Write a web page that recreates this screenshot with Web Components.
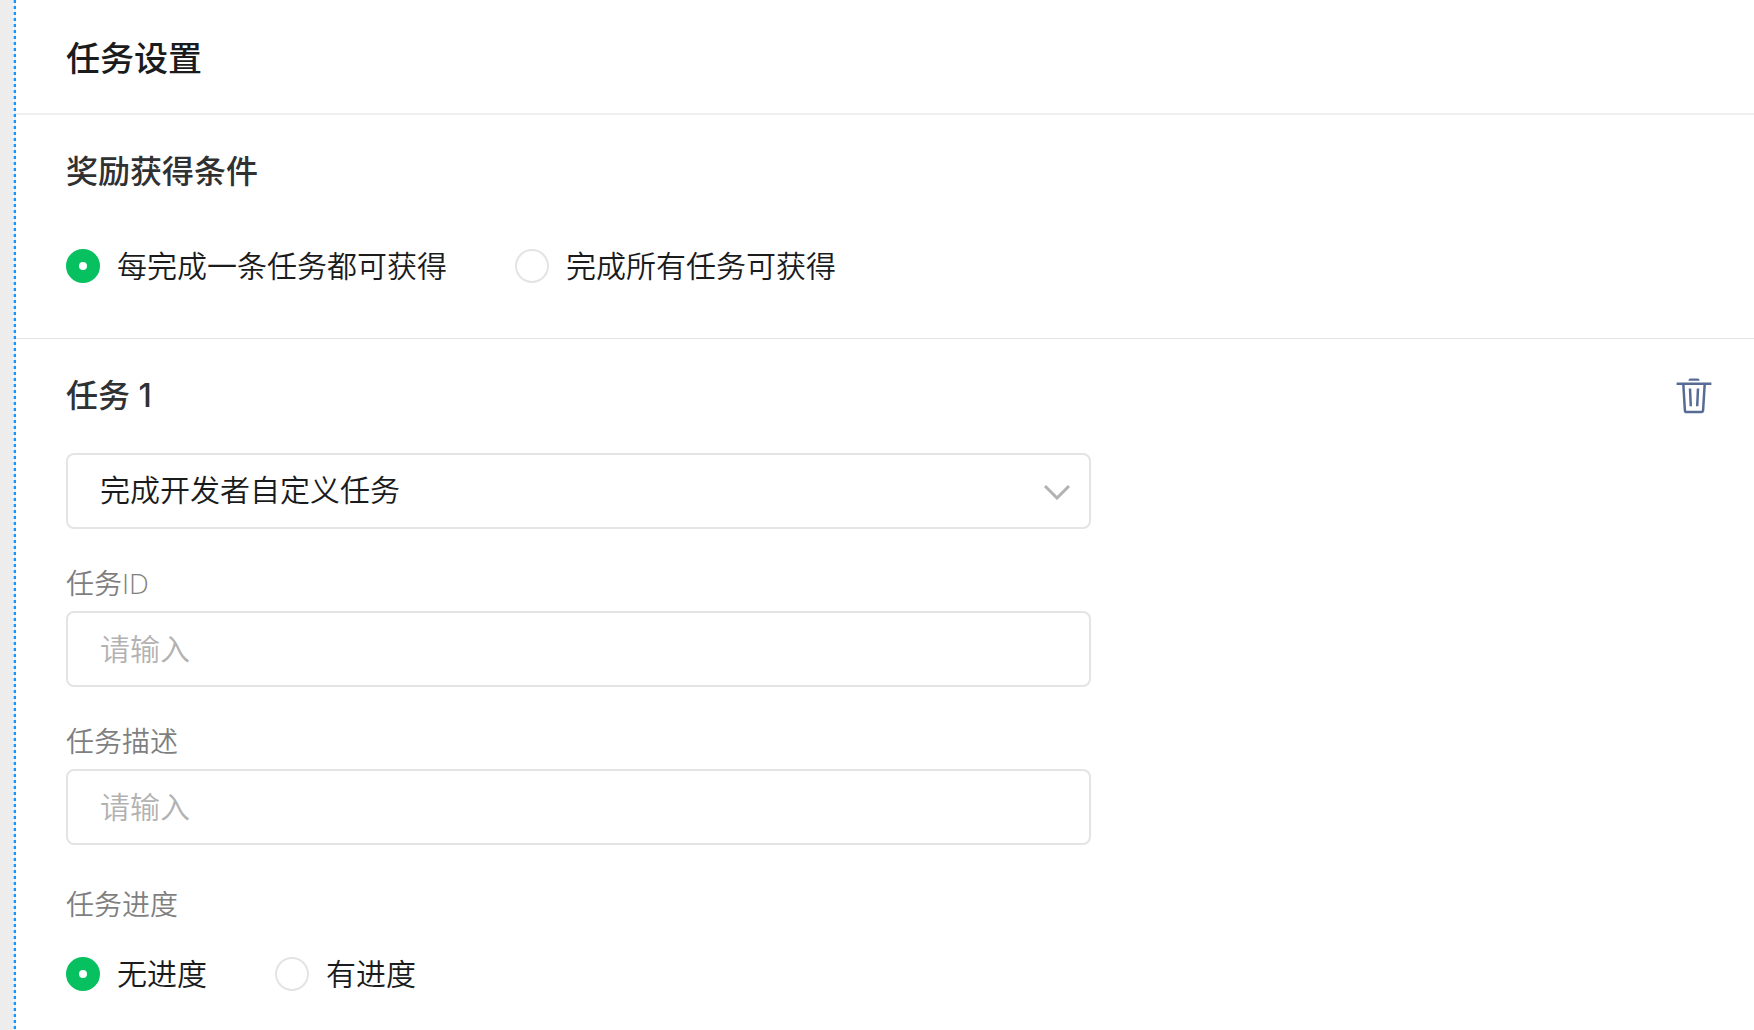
<!DOCTYPE html>
<html lang="zh-CN">
<head>
<meta charset="utf-8">
<meta name="viewport" content="width=device-width, initial-scale=1">
<title>任务设置</title>
<style>
    html, body {
        margin: 0;
        min-height: 100%;
    }
    body {
        display: flex;
        min-height: 100vh;
        background: #ededed;
        color: #1a1b1c;
        font-family: "Open Sans", "Noto Sans CJK SC", sans-serif;
        font-size: 30px;
        font-weight: 350;
        line-height: 42px;
    }
</style>
</head>
<body>
<settings-panel heading="任务设置">
    <settings-section heading="奖励获得条件">
        <radio-group name="condition" label="奖励获得条件" options="每完成一条任务都可获得|完成所有任务可获得"></radio-group>
    </settings-section>
    <settings-section heading="任务 1" class="task">
        <delete-button slot="action" label="删除任务"></delete-button>
        <select-field label="任务类型" options="完成开发者自定义任务"></select-field>
        <text-field label="任务ID" placeholder="请输入"></text-field>
        <text-field label="任务描述" placeholder="请输入"></text-field>
        <radio-group name="progress" label="任务进度" options="无进度|有进度" show-label></radio-group>
    </settings-section>
</settings-panel>

<script>
class SettingsPanel extends HTMLElement {
    constructor(){
        super();
        this.attachShadow({mode:"open"}).innerHTML = `
            <style>
                :host {
                    display: flex;
                    flex: 1;
                    min-width: 0;
                    margin-left: 13px;
                    background: #fff;
                }
                .edge {
                    box-sizing: border-box;
                    flex: none;
                    width: 3px;
                    border-left: 1px solid #ffffff99;
                    background: repeating-linear-gradient(#1296ff 0 3px, #e4f2fd 3px 6px) border-box;
                }
                main {
                    flex: 1;
                    min-width: 0;
                }
                header {
                    padding: 33px 50px 30px;
                    border-bottom: 2px solid #efefef;
                }
                h1 {
                    margin: 0;
                    font-size: 34px;
                    font-weight: 500;
                    line-height: 50px;
                }
            </style>
            <div class="edge"></div>
            <main>
                <header><h1></h1></header>
                <slot></slot>
            </main>
        `;
        this.shadowRoot.querySelector("h1").textContent = this.getAttribute("heading");
    }
}

class SettingsSection extends HTMLElement {
    constructor(){
        super();
        this.attachShadow({mode:"open"}).innerHTML = `
            <style>
                :host {
                    display: block;
                    padding: 36px 42px 51px 50px;
                    border-bottom: 1px solid #e4e4e4;
                }
                :host(.task) {
                    padding-bottom: 36px;
                    border-bottom: 0;
                }
                .head {
                    display: flex;
                    align-items: center;
                    justify-content: space-between;
                    margin-bottom: 52px;
                }
                :host(.task) .head {
                    margin-bottom: 36px;
                }
                h2 {
                    margin: 0;
                    color: #2f3133;
                    font-family: Inter, "Noto Sans CJK SC", sans-serif;
                    font-size: 32px;
                    font-weight: 500;
                    line-height: 42px;
                }
                .body {
                    display: flex;
                    flex-direction: column;
                    gap: 36px;
                    max-width: 1025px;
                }
            </style>
            <div class="head"><h2></h2><slot name="action"></slot></div>
            <div class="body"><slot></slot></div>
        `;
        this.shadowRoot.querySelector("h2").textContent = this.getAttribute("heading");
    }
}

class RadioGroup extends HTMLElement {
    constructor(){
        super();
        var name = this.getAttribute("name");
        var label = this.getAttribute("label");
        var options = this.getAttribute("options").split("|");
        this.attachShadow({mode:"open"}).innerHTML = `
            <style>
                :host {
                    display: block;
                }
                :host([show-label]) {
                    padding-top: 5px;
                }
                .title {
                    margin-bottom: 31px;
                    color: #7f7f7f;
                    font-size: 28px;
                    line-height: 36px;
                }
                .options {
                    display: flex;
                    flex-wrap: wrap;
                    gap: 68px;
                }
                label {
                    display: flex;
                    align-items: center;
                    gap: 17px;
                    cursor: pointer;
                }
                input {
                    appearance: none;
                    flex: none;
                    box-sizing: border-box;
                    width: 34px;
                    height: 34px;
                    margin: 0;
                    border: 2px solid #e4e4e4;
                    border-radius: 50%;
                    background: #fff;
                    cursor: pointer;
                }
                input:checked {
                    border: 13px solid #07c160;
                }
            </style>
            ${this.hasAttribute("show-label") ? `<div class="title">${label}</div>` : ""}
            <div class="options" role="radiogroup" aria-label="${label}">
                ${options.map((text,i) => `
                    <label><input type="radio" name="${name}" value="${i}" ${i ? "" : "checked"}><span>${text}</span></label>
                `).join("")}
            </div>
        `;
    }
}

class SelectField extends HTMLElement {
    constructor(){
        super();
        var options = this.getAttribute("options").split("|");
        this.attachShadow({mode:"open"}).innerHTML = `
            <style>
                :host {
                    display: grid;
                    align-items: center;
                }
                select, svg {
                    grid-area: 1 / 1;
                }
                select {
                    appearance: none;
                    box-sizing: border-box;
                    width: 100%;
                    height: 76px;
                    padding: 0 64px 2px 32px;
                    border: 2px solid #e4e4e4;
                    border-radius: 8px;
                    background: #fff;
                    color: inherit;
                    font: inherit;
                }
                svg {
                    justify-self: end;
                    margin-right: 20px;
                    pointer-events: none;
                }
            </style>
            <select aria-label="${this.getAttribute("label")}">
                ${options.map(text => `<option>${text}</option>`).join("")}
            </select>
            <svg width="28" height="18" viewBox="0 0 28 18" fill="none" stroke="#b2b2b2" stroke-width="3"><path d="M2 4l12 12L26 4"/></svg>
        `;
    }
}

class TextField extends HTMLElement {
    constructor(){
        super();
        this.attachShadow({mode:"open"}).innerHTML = `
            <style>
                :host {
                    display: flex;
                    flex-direction: column;
                    gap: 10px;
                }
                label {
                    color: #7f7f7f;
                    font-size: 28px;
                    line-height: 36px;
                }
                input {
                    box-sizing: border-box;
                    width: 100%;
                    height: 76px;
                    padding: 0 32px 2px;
                    border: 2px solid #e4e4e4;
                    border-radius: 8px;
                    background: #fff;
                    color: inherit;
                    font: inherit;
                }
                input::placeholder {
                    color: #b2b2b2;
                }
            </style>
            <label for="field">${this.getAttribute("label")}</label>
            <input id="field" type="text" placeholder="${this.getAttribute("placeholder")}">
        `;
    }
}

class DeleteButton extends HTMLElement {
    constructor(){
        super();
        this.attachShadow({mode:"open"}).innerHTML = `
            <style>
                :host {
                    display: block;
                }
                button {
                    display: block;
                    padding: 0;
                    border: 0;
                    background: none;
                    color: #576b95;
                    cursor: pointer;
                }
                svg {
                    display: block;
                }
            </style>
            <button type="button" aria-label="${this.getAttribute("label")}">
                <svg width="36" height="36" viewBox="0 0 36 36" fill="none" stroke="currentColor" stroke-width="2.5">
                    <path d="M12.500 2.800v-.6q0-1.700 1.700-1.700h7.600q1.700 0 1.700 1.700v.6z" fill="currentColor" stroke="none"/>
                    <path d="M.6 5.800h34.800"/>
                    <path d="M7.300 6l1.600 26.300q.1 1.800 1.900 1.800h14.400q1.800 0 1.900-1.800L28.700 6M14 10.500l.8 17.800M22 10.500l-.8 17.800"/>
                </svg>
            </button>
        `;
    }
}

window.customElements.define("settings-panel",SettingsPanel);
window.customElements.define("settings-section",SettingsSection);
window.customElements.define("radio-group",RadioGroup);
window.customElements.define("select-field",SelectField);
window.customElements.define("text-field",TextField);
window.customElements.define("delete-button",DeleteButton);
</script>
</body>
</html>
